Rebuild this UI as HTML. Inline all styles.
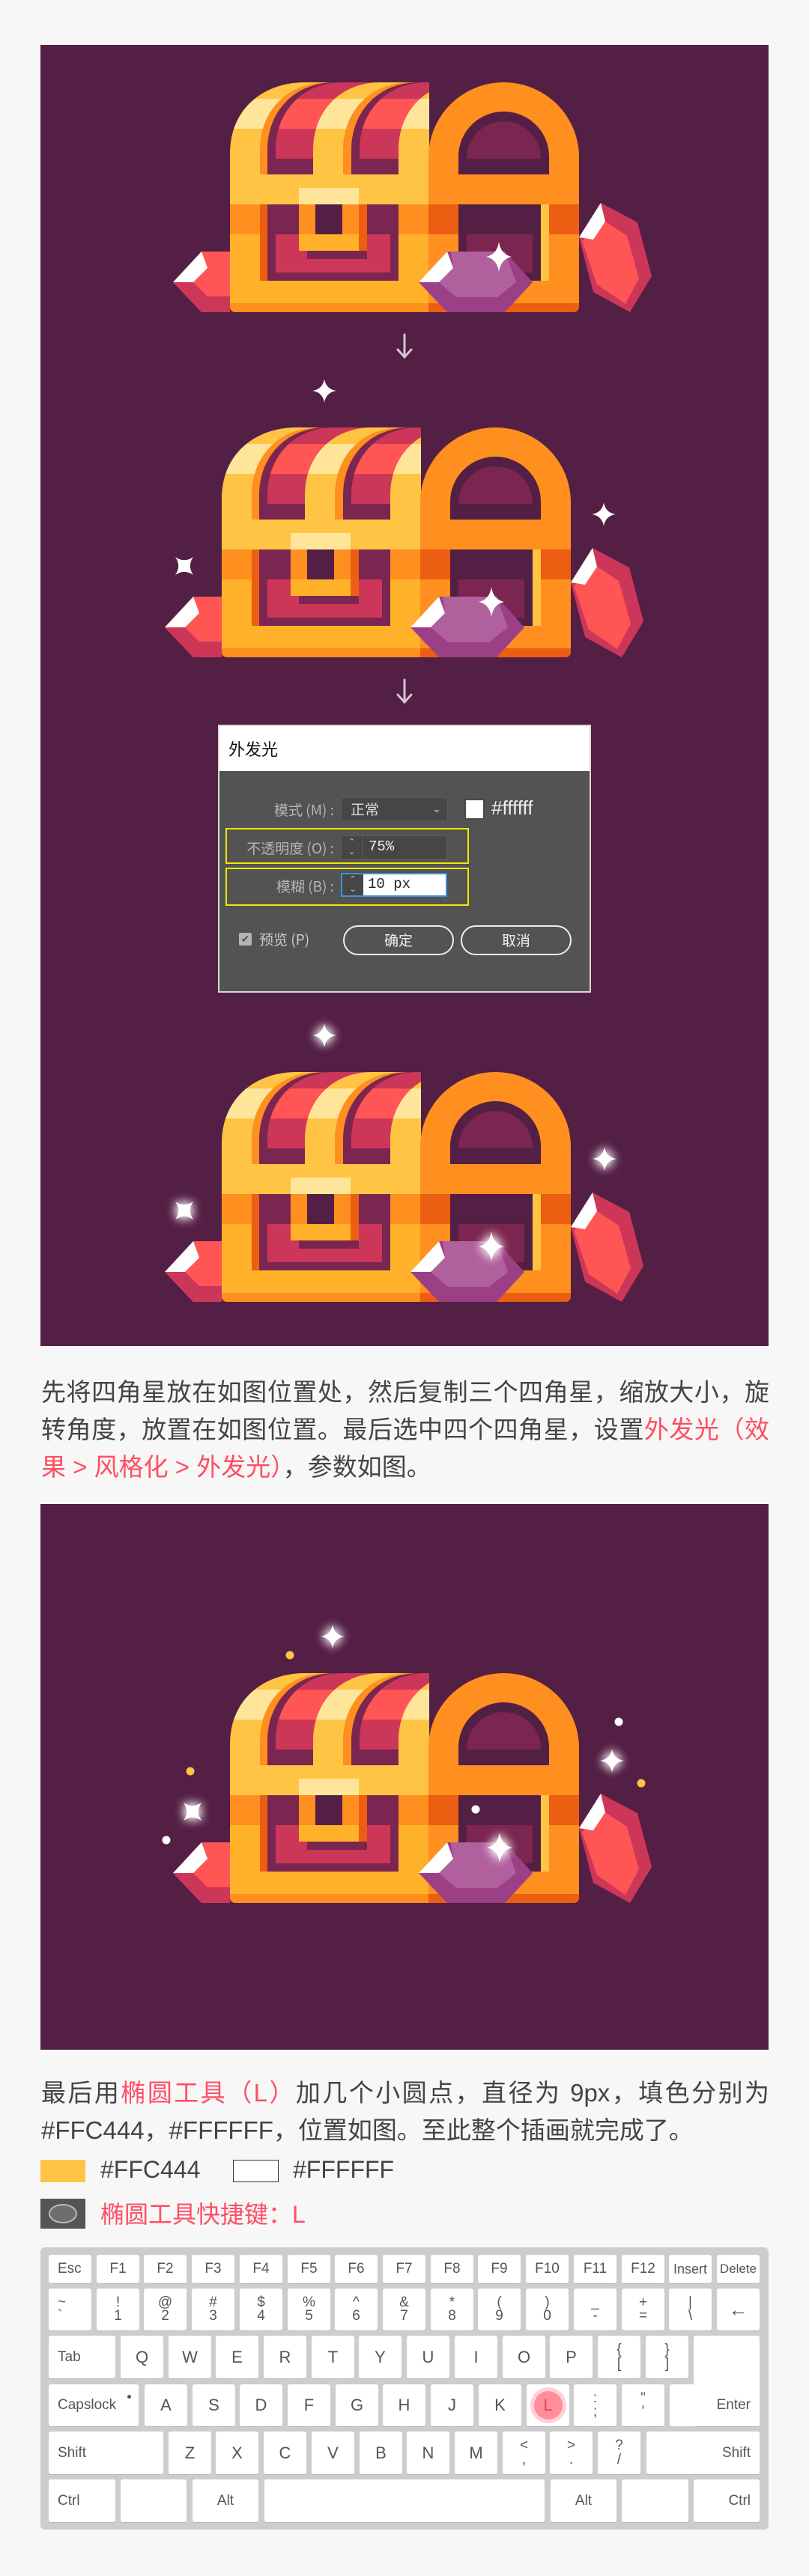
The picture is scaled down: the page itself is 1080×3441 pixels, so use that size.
<!DOCTYPE html>
<html><head><meta charset="utf-8">
<style>
*{margin:0;padding:0;box-sizing:border-box}
html,body{width:1080px;height:3441px;background:#f7f7f7;overflow:hidden}
body{position:relative;font-family:"Liberation Sans","Noto Sans CJK SC",sans-serif}
.abs{position:absolute}
.p{position:absolute;left:55px;width:972px;font-size:33px;color:#444;font-family:"Liberation Sans","Noto Sans CJK SC",sans-serif}
.p div{height:50px;line-height:50px;white-space:nowrap}
.j{text-align:justify;text-align-last:justify}
.r{color:#ff4d62}
.dlg{font-family:"Noto Sans CJK SC","WenQuanYi Zen Hei",sans-serif}
.lbl{position:absolute;color:#b4b4b4;font-size:19px;text-align:right;width:200px}
.kb{position:absolute;left:54px;top:3002px;width:972px;height:377px;background:#cdcdcd;border-radius:6px}
.k{position:absolute;background:#fff;border-radius:3px;box-shadow:0 1px 0 #b8b8b8;color:#555;font-size:19px;font-family:"Liberation Sans Narrow","Liberation Sans",sans-serif;text-align:center}
.k.c{display:flex;align-items:center;justify-content:center;font-size:22px}
.k.l{display:flex;align-items:center;padding-left:12px;justify-content:flex-start}
.k.rt{display:flex;align-items:center;justify-content:flex-end;padding-right:12px}
.k .t,.k .b{position:absolute;left:0;width:100%;font-size:19px}
.k .t{top:8px}.k .b{bottom:8px}
</style></head><body>

<svg class="abs" style="left:0;top:0" width="1080" height="2740" viewBox="0 0 1080 2740">
<defs>
<linearGradient id="gR" gradientUnits="userSpaceOnUse" x1="0" y1="0" x2="0" y2="123">
<stop offset="0" stop-color="#CC3759"/><stop offset=".179" stop-color="#CC3759"/><stop offset=".179" stop-color="#FF5555"/><stop offset=".504" stop-color="#FF5555"/><stop offset=".504" stop-color="#CC3759"/><stop offset=".83" stop-color="#CC3759"/><stop offset=".83" stop-color="#7B2650"/><stop offset="1" stop-color="#7B2650"/>
</linearGradient>
<linearGradient id="gY" gradientUnits="userSpaceOnUse" x1="0" y1="0" x2="0" y2="123">
<stop offset="0" stop-color="#FFC444"/><stop offset=".179" stop-color="#FFC444"/><stop offset=".179" stop-color="#FFE59A"/><stop offset=".504" stop-color="#FFE59A"/><stop offset=".504" stop-color="#FFC444"/><stop offset="1" stop-color="#FFC444"/>
</linearGradient>
<clipPath id="lidc"><path d="M0,124 V95 C0,35 45,0 100,0 H266 V124 Z"/></clipPath>
<filter id="glow" x="-100%" y="-100%" width="300%" height="300%">
<feGaussianBlur in="SourceGraphic" stdDeviation="7" result="b"/>
<feMerge><feMergeNode in="b"/><feMergeNode in="b"/><feMergeNode in="SourceGraphic"/></feMerge>
</filter>
<path id="spk" d="M0,-20 Q3,-3 20,0 Q3,3 0,20 Q-3,3 -20,0 Q-3,-3 0,-20Z" fill="#fff"/>
<g id="chest">
 <g clip-path="url(#lidc)">
  <rect x="0" y="0" width="266" height="124" fill="url(#gY)"/>
  <path d="M40,124 V90 C40,40 75,0 130,0 H266 V124Z" fill="#FF8F1F"/>
  <path d="M50,124 V90 C50,40 85,0 140,0 H266 V124Z" fill="#7B2650"/>
  <path d="M61,124 V90 C61,40 96,0 151,0 H266 V124Z" fill="url(#gR)"/>
  <path d="M111,124 V90 C111,40 146,0 201,0 H266 V124Z" fill="url(#gY)"/>
  <path d="M151,124 V90 C151,40 186,0 241,0 H266 V124Z" fill="#FF8F1F"/>
  <path d="M162,124 V90 C162,40 197,0 252,0 H266 V124Z" fill="#7B2650"/>
  <path d="M173,124 V90 C173,40 208,0 263,0 H300 V124Z" fill="url(#gR)"/>
  <path d="M225,124 V90 C225,40 260,0 315,0 H330 V124Z" fill="url(#gY)"/>
 </g>
 <path d="M265,124 V100 A100.5,100 0 0 1 466,100 V124Z" fill="#FF8F1F"/>
 <path d="M305,124 V99 A60.5,60 0 0 1 426,99 V124Z" fill="#541F45"/>
 <path d="M316,102 V101.5 A49.5,49.5 0 0 1 415,101.5 V102Z" fill="#7B2650"/>
 <rect x="0" y="123" width="266" height="40" fill="#FFC444"/>
 <rect x="265" y="123" width="201" height="40" fill="#FF8F1F"/>
 <path d="M0,163 H266 V307 H8 Q0,307 0,299Z" fill="#FFB129"/>
 <path d="M265,163 H466 V299 Q466,307 458,307 H265Z" fill="#FF8F1F"/>
 <rect x="0" y="163" width="40" height="40" fill="#FF8F1F"/>
 <rect x="225" y="163" width="41" height="40" fill="#FF8F1F"/>
 <rect x="265" y="163" width="40" height="40" fill="#EC5E12"/>
 <rect x="426" y="163" width="40" height="40" fill="#EC5E12"/>
 <rect x="40" y="163" width="10" height="102" fill="#EC5E12"/>
 <rect x="50" y="163" width="175" height="102" fill="#7B2650"/>
 <rect x="61" y="203" width="153" height="51" fill="#CC3759"/>
 <rect x="103" y="225" width="80" height="11" fill="#7B2650"/>
 <rect x="92" y="163" width="80" height="40" fill="#FF8F1F"/>
 <rect x="114" y="163" width="36" height="40" fill="#541F45"/>
 <rect x="172" y="163" width="11" height="62" fill="#EC5E12"/>
 <rect x="92" y="203" width="80" height="22" fill="#FFB129"/>
 <rect x="92" y="141" width="80" height="22" fill="#FFE59A"/>
 <rect x="305" y="163" width="121" height="102" fill="#541F45"/>
 <rect x="316" y="203" width="88" height="51" fill="#7B2650"/>
 <rect x="415" y="163" width="11" height="102" fill="#FFC444"/>
 <path d="M0,295 H266 V307 H8 Q0,307 0,299Z" fill="#FF8F1F"/>
 <path d="M265,295 H466 V299 Q466,307 458,307 H265Z" fill="#EC5E12"/>
 <polygon points="-76,267 -38,226 0,226 0,307 -38,307" fill="#FF5555"/>
 <polygon points="-76,267 -49,267 -30,286 0,286 0,307 -38,307" fill="#CC3759"/>
 <polygon points="-76,267 -38,226 -30,248 -49,267" fill="#fff"/>
 <polygon points="252,267 290,226 367,226 404,267 367,307 290,307" fill="#9B3F86"/>
 <polygon points="295,226 367,226 382,267 357,287 302,287 279,267 298,248" fill="#B0609C"/>
 <polygon points="252,267 290,226 298,248 279,267" fill="#fff"/>
 <polygon points="466,207 495,161 544,187 563,259 534,307 485,280" fill="#CC3759"/>
 <polygon points="470,212 501,186 530,205 546,262 528,296 490,270" fill="#FF5555"/>
 <polygon points="466,207 495,161 501,186 485,210" fill="#fff"/>
</g>
</defs>

<rect x="54" y="60" width="972" height="1738" fill="#541F45"/>
<use href="#chest" x="307" y="110"/>
<use href="#spk" transform="translate(666,343) scale(.85,1)"/>
<g stroke="#d0c8d0" stroke-width="3" fill="none" stroke-linecap="round">
<path d="M540,447 V477 M531,467 L540,477 L549,467"/>
<path d="M540,908 V938 M531,928 L540,938 L549,928"/>
</g>
<use href="#chest" x="296" y="571"/>
<use href="#spk" transform="translate(656,804) scale(.85,1)"/>
<use href="#spk" transform="translate(433,522) scale(.78)"/>
<use href="#spk" transform="translate(806,687) scale(.78)"/>
<use href="#spk" transform="translate(246,756) rotate(45) scale(.85)"/>

<use href="#chest" x="296" y="1432"/>
<g filter="url(#glow)">
<use href="#spk" transform="translate(656,1665) scale(.85,1)"/>
<use href="#spk" transform="translate(433,1383) scale(.78)"/>
<use href="#spk" transform="translate(807,1548) scale(.78)"/>
<use href="#spk" transform="translate(246,1617) rotate(45) scale(.85)"/>
</g>

<rect x="54" y="2009" width="972" height="729" fill="#541F45"/>
<use href="#chest" x="307" y="2235"/>
<g filter="url(#glow)">
<use href="#spk" transform="translate(667,2468) scale(.85,1)"/>
<use href="#spk" transform="translate(444,2186) scale(.78)"/>
<use href="#spk" transform="translate(817,2352) scale(.78)"/>
<use href="#spk" transform="translate(257,2420) rotate(45) scale(.85)"/>
</g>
<circle cx="387" cy="2211" r="5.5" fill="#FFC444"/>
<circle cx="254" cy="2366" r="5.5" fill="#FFC444"/>
<circle cx="856" cy="2382" r="5.5" fill="#FFC444"/>
<circle cx="222" cy="2458" r="5.5" fill="#fff"/>
<circle cx="826" cy="2300" r="5.5" fill="#fff"/>
<circle cx="635" cy="2417" r="5.5" fill="#fff"/>
</svg>

<div class="abs dlg" style="left:291px;top:968px;width:498px;height:358px;background:#535353;border:2px solid #d8d8d8">
 <div style="position:absolute;left:0;top:0;width:100%;height:60px;background:#fff;font-size:22px;color:#111;line-height:60px;padding-left:12px">外发光</div>
</div>
<div class="lbl dlg" style="left:246px;top:1068px">模式 (M) :</div>
<div class="abs dlg" style="left:455px;top:1065px;width:143px;height:32px;background:#464646;border:1px solid #5c5c5c;border-radius:2px;color:#ddd;font-size:19px;line-height:30px;padding-left:12px">正常<span style="position:absolute;right:8px;top:-1px;font-size:14px;color:#ccc">&#8964;</span></div>
<div class="abs" style="left:620px;top:1067px;width:27px;height:28px;background:#fff;border:2px solid #4a4a4a"></div>
<div class="abs" style="left:656px;top:1064px;color:#eee;font-size:26px;font-family:'Liberation Sans',sans-serif">#ffffff</div>
<div class="abs" style="left:301px;top:1106px;width:325px;height:48px;border:2px solid #f0e800"></div>
<div class="lbl dlg" style="left:246px;top:1119px">不透明度 (O) :</div>
<div class="abs" style="left:455px;top:1116px;width:142px;height:32px;background:#464646;border:1px solid #5c5c5c"><div style="position:absolute;left:0;top:0;width:28px;height:30px;border-right:1px solid #5c5c5c;color:#ccc;font-size:11px;text-align:center;line-height:13px;padding-top:2px">&#8963;<br>&#8964;</div><span style="position:absolute;left:36px;top:3px;color:#eee;font-size:19px;font-family:'Liberation Mono',monospace">75%</span></div>
<div class="abs" style="left:301px;top:1159px;width:325px;height:51px;border:2px solid #f0e800"></div>
<div class="lbl dlg" style="left:246px;top:1170px">模糊 (B) :</div>
<div class="abs" style="left:455px;top:1166px;width:142px;height:32px;background:#fff;border:2px solid #3d8ee6"><div style="position:absolute;left:0;top:0;width:28px;height:28px;background:#464646;color:#ccc;font-size:11px;text-align:center;line-height:13px;padding-top:1px">&#8963;<br>&#8964;</div><span style="position:absolute;left:34px;top:2px;color:#222;font-size:19px;font-family:'Liberation Mono',monospace">10 px</span></div>
<div class="abs" style="left:319px;top:1246px;width:17px;height:17px;background:#b5b5b5;border-radius:2px;color:#555;font-size:14px;line-height:17px;text-align:center">&#10004;</div>
<div class="abs dlg" style="left:346px;top:1241px;color:#ccc;font-size:19px">预览 (P)</div>
<div class="abs dlg" style="left:458px;top:1236px;width:148px;height:40px;border:2px solid #eee;border-radius:20px;color:#eee;font-size:19px;text-align:center;line-height:36px">确定</div>
<div class="abs dlg" style="left:615px;top:1236px;width:148px;height:40px;border:2px solid #eee;border-radius:20px;color:#eee;font-size:19px;text-align:center;line-height:36px">取消</div>

<div class="p" style="top:1835px">
<div class="j">先将四角星放在如图位置处，然后复制三个四角星，缩放大小，旋</div>
<div class="j">转角度，放置在如图位置。最后选中四个四角星，设置<span class="r">外发光（效</span></div>
<div><span class="r">果 &gt; 风格化 &gt; 外发光）</span>，参数如图。</div>
</div>

<div class="p" style="top:2771px">
<div class="j">最后用<span class="r">椭圆工具（L）</span>加几个小圆点，直径为 9px，填色分别为</div>
<div>#FFC444，#FFFFFF，位置如图。至此整个插画就完成了。</div>
</div>
<div class="abs" style="left:54px;top:2885px;width:60px;height:30px;background:#FFC444"></div>
<div class="abs" style="left:134px;top:2880px;font-size:32px;color:#444">#FFC444</div>
<div class="abs" style="left:311px;top:2885px;width:61px;height:30px;background:#fff;border:1.5px solid #333"></div>
<div class="abs" style="left:391px;top:2880px;font-size:32px;color:#444">#FFFFFF</div>
<div class="abs" style="left:54px;top:2937px;width:60px;height:40px;background:#555"><div style="position:absolute;left:11px;top:7px;width:38px;height:26px;border-radius:50%;border:2px solid #bbb;background:#6e6e6e"></div></div>
<div class="abs r" style="left:134px;top:2933px;font-size:32px;font-family:'Liberation Sans','Noto Sans CJK SC',sans-serif">椭圆工具快捷键：L</div>

<div class="kb"></div>
<div class="k l" style="left:65px;top:3012px;width:57px;height:38px">Esc</div>
<div class="k c" style="left:129px;top:3012px;width:57px;height:38px;font-size:19px">F1</div>
<div class="k c" style="left:192px;top:3012px;width:57px;height:38px;font-size:19px">F2</div>
<div class="k c" style="left:256px;top:3012px;width:57px;height:38px;font-size:19px">F3</div>
<div class="k c" style="left:320px;top:3012px;width:57px;height:38px;font-size:19px">F4</div>
<div class="k c" style="left:384px;top:3012px;width:57px;height:38px;font-size:19px">F5</div>
<div class="k c" style="left:447px;top:3012px;width:57px;height:38px;font-size:19px">F6</div>
<div class="k c" style="left:511px;top:3012px;width:57px;height:38px;font-size:19px">F7</div>
<div class="k c" style="left:575px;top:3012px;width:57px;height:38px;font-size:19px">F8</div>
<div class="k c" style="left:638px;top:3012px;width:57px;height:38px;font-size:19px">F9</div>
<div class="k c" style="left:702px;top:3012px;width:57px;height:38px;font-size:19px">F10</div>
<div class="k c" style="left:766px;top:3012px;width:57px;height:38px;font-size:19px">F11</div>
<div class="k c" style="left:830px;top:3012px;width:57px;height:38px;font-size:19px">F12</div>
<div class="k c" style="left:893px;top:3012px;width:57px;height:38px;font-size:18px">Insert</div>
<div class="k c" style="left:957px;top:3012px;width:57px;height:38px;font-size:17px">Delete</div>
<div class="k" style="left:65px;top:3057px;width:57px;height:56px;text-align:left"><span class="t" style="left:12px">~</span><span class="b" style="left:12px">`</span></div>
<div class="k" style="left:129px;top:3057px;width:57px;height:56px"><span class="t">!</span><span class="b">1</span></div>
<div class="k" style="left:192px;top:3057px;width:57px;height:56px"><span class="t">@</span><span class="b">2</span></div>
<div class="k" style="left:256px;top:3057px;width:57px;height:56px"><span class="t">#</span><span class="b">3</span></div>
<div class="k" style="left:320px;top:3057px;width:57px;height:56px"><span class="t">$</span><span class="b">4</span></div>
<div class="k" style="left:384px;top:3057px;width:57px;height:56px"><span class="t">%</span><span class="b">5</span></div>
<div class="k" style="left:447px;top:3057px;width:57px;height:56px"><span class="t">^</span><span class="b">6</span></div>
<div class="k" style="left:511px;top:3057px;width:57px;height:56px"><span class="t">&amp;</span><span class="b">7</span></div>
<div class="k" style="left:575px;top:3057px;width:57px;height:56px"><span class="t">*</span><span class="b">8</span></div>
<div class="k" style="left:638px;top:3057px;width:57px;height:56px"><span class="t">(</span><span class="b">9</span></div>
<div class="k" style="left:702px;top:3057px;width:57px;height:56px"><span class="t">)</span><span class="b">0</span></div>
<div class="k" style="left:766px;top:3057px;width:57px;height:56px"><span class="t">_</span><span class="b">-</span></div>
<div class="k" style="left:830px;top:3057px;width:57px;height:56px"><span class="t">+</span><span class="b">=</span></div>
<div class="k" style="left:893px;top:3057px;width:57px;height:56px"><span class="t">|</span><span class="b">\</span></div>
<div class="k c" style="left:957px;top:3057px;width:57px;height:56px;font-size:26px">&#8592;</div>
<div class="k l" style="left:65px;top:3120px;width:89px;height:57px">Tab</div>
<div class="k c" style="left:161px;top:3120px;width:57px;height:57px">Q</div>
<div class="k c" style="left:225px;top:3120px;width:57px;height:57px">W</div>
<div class="k c" style="left:288px;top:3120px;width:57px;height:57px">E</div>
<div class="k c" style="left:352px;top:3120px;width:57px;height:57px">R</div>
<div class="k c" style="left:416px;top:3120px;width:57px;height:57px">T</div>
<div class="k c" style="left:479px;top:3120px;width:57px;height:57px">Y</div>
<div class="k c" style="left:543px;top:3120px;width:57px;height:57px">U</div>
<div class="k c" style="left:607px;top:3120px;width:57px;height:57px">I</div>
<div class="k c" style="left:671px;top:3120px;width:57px;height:57px">O</div>
<div class="k c" style="left:734px;top:3120px;width:57px;height:57px">P</div>
<div class="k" style="left:798px;top:3120px;width:57px;height:57px"><span class="t">{</span><span class="b">[</span></div>
<div class="k" style="left:862px;top:3120px;width:57px;height:57px"><span class="t">}</span><span class="b">]</span></div>
<div class="k" style="left:926px;top:3120px;width:88px;height:121px"></div>
<div class="k rt" style="left:894px;top:3185px;width:120px;height:56px;box-shadow:none">Enter</div>
<div class="k l" style="left:65px;top:3185px;width:120px;height:56px">Capslock<span style="position:absolute;right:10px;top:14px;width:5px;height:5px;border-radius:50%;background:#555"></span></div>
<div class="k c" style="left:193px;top:3185px;width:57px;height:56px">A</div>
<div class="k c" style="left:257px;top:3185px;width:57px;height:56px">S</div>
<div class="k c" style="left:320px;top:3185px;width:57px;height:56px">D</div>
<div class="k c" style="left:384px;top:3185px;width:57px;height:56px">F</div>
<div class="k c" style="left:448px;top:3185px;width:57px;height:56px">G</div>
<div class="k c" style="left:511px;top:3185px;width:57px;height:56px">H</div>
<div class="k c" style="left:575px;top:3185px;width:57px;height:56px">J</div>
<div class="k c" style="left:639px;top:3185px;width:57px;height:56px">K</div>
<div class="k c" style="left:703px;top:3185px;width:57px;height:56px"><span style="width:48px;height:48px;border-radius:50%;background:#ffd0d5;display:flex;align-items:center;justify-content:center"><span style="width:38px;height:38px;border-radius:50%;background:#ff8e99;display:flex;align-items:center;justify-content:center;color:#e0485a">L</span></span></div>
<div class="k" style="left:766px;top:3185px;width:57px;height:56px"><span class="t">:</span><span class="b">;</span></div>
<div class="k" style="left:830px;top:3185px;width:57px;height:56px"><span class="t">"</span><span class="b">'</span></div>
<div class="k l" style="left:65px;top:3248px;width:153px;height:57px">Shift</div>
<div class="k c" style="left:225px;top:3248px;width:57px;height:57px">Z</div>
<div class="k c" style="left:288px;top:3248px;width:57px;height:57px">X</div>
<div class="k c" style="left:352px;top:3248px;width:57px;height:57px">C</div>
<div class="k c" style="left:416px;top:3248px;width:57px;height:57px">V</div>
<div class="k c" style="left:480px;top:3248px;width:57px;height:57px">B</div>
<div class="k c" style="left:543px;top:3248px;width:57px;height:57px">N</div>
<div class="k c" style="left:607px;top:3248px;width:57px;height:57px">M</div>
<div class="k" style="left:671px;top:3248px;width:57px;height:57px"><span class="t">&lt;</span><span class="b">,</span></div>
<div class="k" style="left:734px;top:3248px;width:57px;height:57px"><span class="t">&gt;</span><span class="b">.</span></div>
<div class="k" style="left:798px;top:3248px;width:57px;height:57px"><span class="t">?</span><span class="b">/</span></div>
<div class="k rt" style="left:863px;top:3248px;width:151px;height:57px">Shift</div>
<div class="k l" style="left:65px;top:3312px;width:89px;height:57px">Ctrl</div>
<div class="k" style="left:161px;top:3312px;width:88px;height:57px"></div>
<div class="k c" style="left:257px;top:3312px;width:88px;height:57px;font-size:19px">Alt</div>
<div class="k" style="left:353px;top:3312px;width:374px;height:57px"></div>
<div class="k c" style="left:735px;top:3312px;width:88px;height:57px;font-size:19px">Alt</div>
<div class="k" style="left:830px;top:3312px;width:89px;height:57px"></div>
<div class="k rt" style="left:926px;top:3312px;width:88px;height:57px">Ctrl</div>

</body></html>
